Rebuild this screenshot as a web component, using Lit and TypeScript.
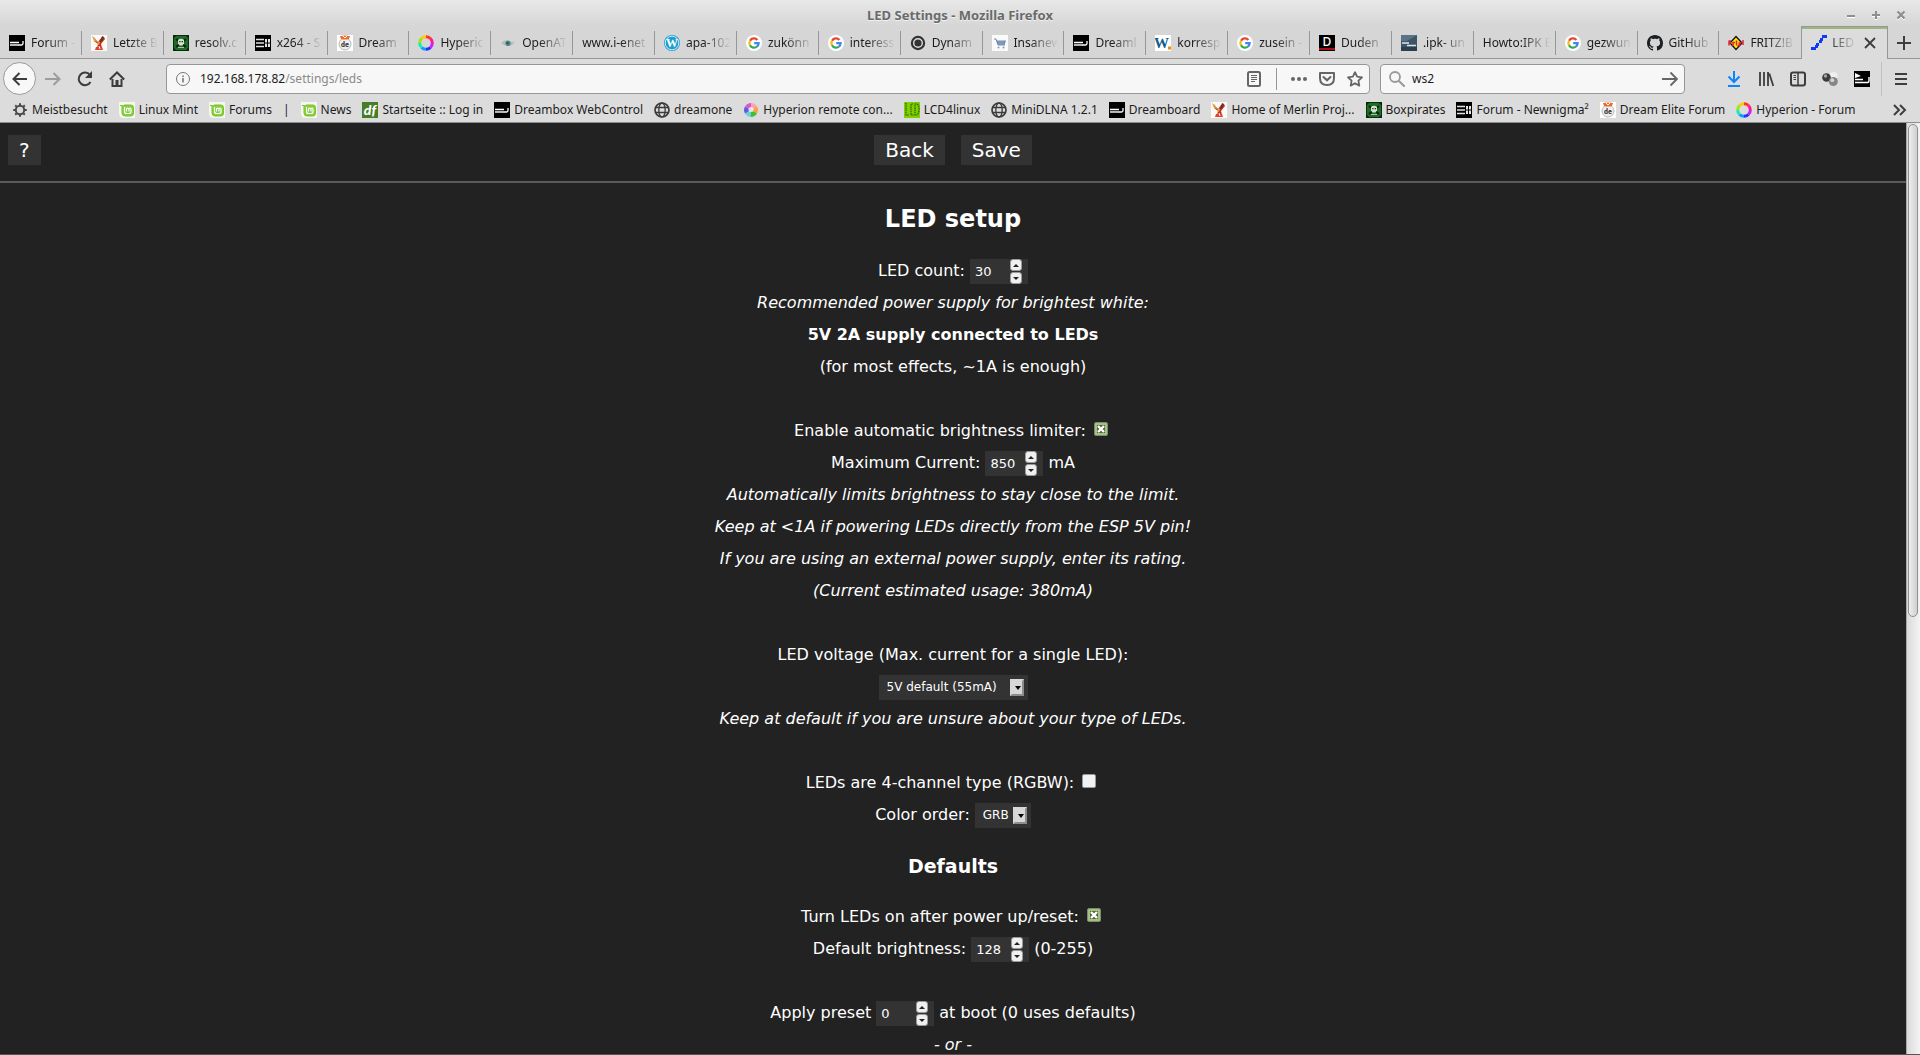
import { LitElement, html, svg, css, nothing, TemplateResult } from "lit";
import { customElement, property, state } from "lit/decorators.js";

type Art = TemplateResult;

const icon = (art: Art, size = 16, box = 16) =>
  html`<svg class="icon" width=${size} height=${size} viewBox="0 0 ${box} ${box}" fill="none" aria-hidden="true">${art}</svg>`;

const art: Record<string, Art> = {
  dream: svg`<rect width="16" height="16" fill="#000"/><path d="M1 7.500h9M1 10h11.500q1.500 0 1.500-1.500V6" stroke="#fff" stroke-width="1.300"/><path d="M1 10.200h8" stroke="#aaa"/>`,
  merlin: svg`<rect width="16" height="16" fill="#fbfaf6"/><path d="M3 3l4 4 3-4 3-1 1 2-4 5 1 4H6l1-4-4-3z" fill="#c5301c"/><path d="M1 1l3 2 2 4-3-1zM7 6l2 1-1 3-2-1z" fill="#d9a04a"/><path d="M11 1l2 1-2 4-2 1z" fill="#5b3220"/><path d="M5 12h6l1 3H4z" fill="#e0452c"/><path d="M8 11l1 3" stroke="#fff"/>`,
  skull: svg`<rect width="16" height="16" fill="#0c2d10"/><rect x="1" y="1" width="14" height="14" fill="#1f6b28"/><path d="M0 2h2V0M14 0v2h2M0 14h2v2M14 16v-2h2" stroke="#061a08"/><path d="M3 4l10 8M13 4L3 12" stroke="#0a220c" stroke-width="2"/><path d="M5 5Q8 2.500 11 5v3.500L9.500 10.500h-3L5 8.500z" fill="#d5dfd0"/><path d="M6.300 6h1.200v1.200H6.300zM8.700 6h1.200v1.200H8.700z" fill="#0a220c"/><path d="M5 12.500h6" stroke="#a8c2a4"/>`,
  bars: svg`<rect width="16" height="16" fill="#000"/><path d="M1 4.500h8M1 8h8M1 11.500h8" stroke="#e4e4e4" stroke-width="1.600"/><path d="M10 4h2v8h-2zM13 4h2v8h-2z" fill="#e4e4e4"/><path d="M10 8h5" stroke="#000"/>`,
  elite: svg`<rect width="16" height="16" fill="#fff"/><circle cx="8" cy="9" r="6" fill="#eee" stroke="#b9b9b9"/><path d="M3 1q5-1 10 0l-1 3q-4 1-8 0z" fill="#ef6b2e"/><path d="M6 1l2 2 2-2" stroke="#fff"/><text x="8" y="12" text-anchor="middle" font-family="Roboto" font-weight="900" font-size="7" fill="#444">de</text>`,
  ring: svg`<g stroke-width="3"><path d="M8 1.700A6.300 6.300 0 0 1 12.450 3.550" stroke="#ff3a20"/><path d="M12.450 3.550A6.300 6.300 0 0 1 14.300 8" stroke="#ff1a8c"/><path d="M14.300 8A6.300 6.300 0 0 1 12.450 12.450" stroke="#d01cff"/><path d="M12.450 12.450A6.300 6.300 0 0 1 8 14.300" stroke="#2632ff"/><path d="M8 14.300A6.300 6.300 0 0 1 3.550 12.450" stroke="#1298ff"/><path d="M3.550 12.450A6.300 6.300 0 0 1 1.700 8" stroke="#10f0b0"/><path d="M1.700 8A6.300 6.300 0 0 1 3.550 3.550" stroke="#9ae812"/><path d="M3.550 3.550A6.300 6.300 0 0 1 8 1.700" stroke="#ffc80a"/></g>`,
  eye: svg`<path d="M1 8Q6 3 10 6q3 2 5 0-2 5-7 5Q4 11 1 8z" fill="#b8bcbc"/><circle cx="8" cy="8.300" r="2.600" fill="#47878a"/><circle cx="7.500" cy="8" r="1" fill="#1e4c52"/>`,
  wordpress: svg`<circle cx="8" cy="8" r="8" fill="#1b9ed0"/><circle cx="8" cy="8" r="6.800" stroke="#fff" stroke-width=".8"/><text x="8" y="12.300" text-anchor="middle" font-family="Liberation Serif" font-weight="700" font-size="12" fill="#fff">W</text>`,
  google: svg`<circle cx="8" cy="8" r="8" fill="#fff"/><g stroke-width="2.300"><path d="M11.400 4.900A4.600 4.600 0 0 0 4 5.700" stroke="#ea4335"/><path d="M4 5.700a4.600 4.600 0 0 0 0 4.600" stroke="#fbbc05"/><path d="M4 10.300a4.600 4.600 0 0 0 7 1.200" stroke="#34a853"/><path d="M11 11.500A4.600 4.600 0 0 0 12.600 8.200H8.200" stroke="#4285f4"/></g>`,
  disc: svg`<circle cx="8" cy="8" r="7.200" fill="#333"/><circle cx="8" cy="8" r="4.300" stroke="#ddd" stroke-width="1.400"/>`,
  cart: svg`<rect width="16" height="16" fill="#fafafa"/><path d="M2 4h2l2 6h7" stroke="#7089ad"/><path d="M4.500 5.500H14L12.500 10H6z" fill="#6d89b5"/><path d="M7 6v4M9 6v4M11 6v4" stroke="#a8bbd7" stroke-width=".6"/><circle cx="6.500" cy="12.500" r="1" fill="#8795a8"/><circle cx="11.500" cy="12.500" r="1" fill="#8795a8"/>`,
  wdot: svg`<rect width="16" height="16" fill="#fff"/><text x="-1" y="13" font-family="Liberation Serif" font-weight="700" font-size="15" fill="#145c8c">W</text><rect x="13" y="11.500" width="3" height="3" fill="#f58a0a"/>`,
  duden: svg`<rect width="16" height="16" fill="#000"/><text x="8" y="11" text-anchor="middle" font-family="Noto Sans" font-weight="500" font-size="12" fill="#fff">D</text><rect y="13" width="16" height="2" fill="#a80f17"/>`,
  slate: svg`<rect width="16" height="16" fill="#3d5566"/><path d="M0 0h16L6 6H0z" fill="#587487"/><path d="M0 12h16v4H0z" fill="#2b404f"/><path d="M1 8h7M6 10.500h9" stroke="#dfe6ea" stroke-width="1.500"/>`,
  github: svg`<path fill="#1b1f23" d="M8 0C3.580 0 0 3.580 0 8c0 3.540 2.290 6.530 5.470 7.590.4.070.55-.17.55-.38 0-.19-.01-.82-.01-1.490-2.010.37-2.530-.49-2.690-.94-.09-.23-.48-.94-.82-1.130-.28-.15-.68-.52-.01-.53.63-.01 1.080.58 1.230.82.72 1.210 1.870.87 2.330.66.07-.52.28-.87.51-1.070-1.780-.2-3.640-.89-3.640-3.950 0-.87.31-1.590.82-2.150-.08-.2-.36-1.020.08-2.120 0 0 .67-.21 2.200.82.64-.18 1.320-.27 2-.27s1.360.09 2 .27c1.530-1.040 2.200-.82 2.200-.82.44 1.100.16 1.920.08 2.120.51.56.82 1.270.82 2.150 0 3.070-1.870 3.750-3.650 3.950.29.25.54.73.54 1.480 0 1.070-.01 1.930-.01 2.200 0 .21.15.46.55.38A8.010 8.010 0 0 0 16 8c0-4.420-3.580-8-8-8z"/>`,
  fritz: svg`<path d="M8 1.500L14 8l-6 6.500L2 8z" fill="#ffe600" stroke="#111" stroke-width="1.300"/><path d="M1 5.500v5M1 6h2M1 8h2M5 7v4M5 7.500h2M8.500 5.500v5M10.500 8h2l-2 2.500h2M15 5v5" stroke="#e0203f" stroke-width="1.500"/>`,
  steps: svg`<path d="M11 0h5v3h-5zM9 3h3v3H9zM8 5h3v3H8zM5 8h3v3H5zM4 10h3v3H4zM0 12h5v3H0z" fill="#0b3bf5"/>`,
  mint: svg`<path d="M0 0h16v16H5Q0 16 0 11z" fill="#f4f8ee"/><path d="M1 3.500h2V11q0 3 3 3h6q2.500 0 2.500-3V5.500Q14.500 3 12 3H5" fill="#87cf3e" stroke="#7cc22f"/><path d="M5.500 5v4.500q0 2 2 2h2.500q2 0 2-2V7q0-1-1-1t-1 1v2.500M9.500 7q0-1-1-1t-1 1v2.500" stroke="#fff" stroke-width="1.200"/>`,
  gear: svg`<circle cx="8" cy="8" r="4.200" stroke="#4a4a4a" stroke-width="2"/><path d="M8 1.200v2M8 12.800v2M1.200 8h2M12.800 8h2M3.200 3.200l1.400 1.400M11.400 11.400l1.400 1.400M3.200 12.800l1.400-1.400M11.400 4.600l1.400-1.400" stroke="#4a4a4a" stroke-width="2"/>`,
  df: svg`<rect width="16" height="16" fill="#477d2a"/><text x="8" y="12.500" text-anchor="middle" font-family="Lato" font-weight="900" font-style="italic" font-size="14" fill="#fff">df</text>`,
  globe: svg`<g stroke="#3c3c3c" stroke-width="1.700"><circle cx="8" cy="8" r="7"/><ellipse cx="8" cy="8" rx="3.200" ry="7" stroke-width="1.300"/><path d="M1.800 5.500h12.400M1.800 10.500h12.400" stroke-width="1.300"/></g>`,
  ball: svg`<circle cx="8" cy="8" r="7" fill="#e9d9ef"/><path d="M8 8V1a7 7 0 0 1 6 3.500z" fill="#f7a3b5"/><path d="M8 8l6-3.500a7 7 0 0 1 0 7z" fill="#f6a04e"/><path d="M8 8l6 3.500A7 7 0 0 1 8 15z" fill="#3fbf2c"/><path d="M8 8v7a7 7 0 0 1-6-3.500z" fill="#6fcfd6"/><path d="M8 8l-6 3.500a7 7 0 0 1 0-7z" fill="#5a5fe0"/><path d="M8 8L2 4.500A7 7 0 0 1 8 1z" fill="#d758cf"/><circle cx="8" cy="7.500" r="2.600" fill="#fff" opacity=".7"/>`,
  lcd: svg`<rect width="16" height="16" fill="#7ed000"/><path d="M2 1v12h3M9 2H7v11h3M11 2h2q2 1 2 5t-2 6h-2z" stroke="#2d5c00" stroke-width="1.200" stroke-dasharray="1.500 .7"/>`,
  info: svg`<circle cx="8" cy="8" r="6.500" stroke="#777"/><path d="M8 7v4.500M8 4.500v1.500" stroke="#777" stroke-width="1.600"/>`,
  back: svg`<path d="M15 8H2M7.500 2L1.500 8l6 6" stroke="#3d3d3d" stroke-width="2"/>`,
  forward: svg`<path d="M0 8h14M8.500 2l6 6-6 6" stroke="#9c9c9c" stroke-width="2"/>`,
  reload: svg`<path d="M13.500 11A6.300 6.300 0 1 1 13 4" stroke="#3d3d3d" stroke-width="2"/><path d="M15 0v7H8z" fill="#3d3d3d"/>`,
  home: svg`<path d="M.8 8.500L8 1.500l7.200 7" stroke="#3d3d3d" stroke-width="2"/><path d="M3.500 8v7h9V8" stroke="#3d3d3d" stroke-width="2"/><path d="M6.500 9h3v6h-3z" fill="#3d3d3d"/>`,
  reader: svg`<rect x="2" y="1" width="12" height="14" rx="1.500" stroke="#666" stroke-width="2"/><path d="M5 4.500h6M5 6.500h6M5 8.500h6M5 10.500h4" stroke="#666"/>`,
  dots: svg`<circle cx="2" cy="8" r="2" fill="#666"/><circle cx="8" cy="8" r="2" fill="#666"/><circle cx="14" cy="8" r="2" fill="#666"/>`,
  pocket: svg`<path d="M1 2h14v5q0 7-7 7T1 7z" stroke="#666" stroke-width="2" stroke-linejoin="round"/><path d="M4.500 6L8 9.300 11.500 6" stroke="#666" stroke-width="2" stroke-linecap="round"/>`,
  star: svg`<path d="M8 1.200l2.100 4.500 4.900.6-3.600 3.400.9 4.900L8 12.200l-4.300 2.400.9-4.900L1 6.300l4.900-.6z" stroke="#666" stroke-width="1.800" stroke-linejoin="round"/>`,
  search: svg`<circle cx="6" cy="6" r="5" stroke="#999" stroke-width="1.800"/><path d="M9.700 9.700l6 6" stroke="#999" stroke-width="2"/>`,
  go: svg`<path d="M0 8h14.500M8.500 1.500L15 8l-6.500 6.500" stroke="#666" stroke-width="1.800"/>`,
  download: svg`<path d="M8 0v10M2.500 5.500L8 11l5.500-5.500M2 15h12" stroke="#0a84ff" stroke-width="2"/>`,
  library: svg`<path d="M2 1v14M6 1v14M10 1v14M11.300 2.500l4 12.500" stroke="#3d3d3d" stroke-width="1.800"/>`,
  sidebar: svg`<rect x="1" y="1.500" width="14" height="13" rx="2" stroke="#3d3d3d" stroke-width="2"/><path d="M8 2v12" stroke="#3d3d3d" stroke-width="1.500"/><path d="M3.500 4.500H6M3.500 6.500H6M3.500 8.500H6" stroke="#3d3d3d"/>`,
  balls: svg`<circle cx="11.500" cy="5" r="4" fill="#efefef"/><circle cx="4.500" cy="6.500" r="4.300" fill="#3c3c3c"/><circle cx="3.500" cy="5" r="1.700" fill="#a4a4a4"/><circle cx="11.300" cy="10.500" r="4.500" fill="#868686"/><circle cx="10.300" cy="9.200" r="1.900" fill="#d5d5d5"/>`,
  dreamFlag: svg`<rect width="16" height="16" fill="#000"/><path d="M1 8.500h8M1 11.500h12.500q1.500 0 1.500-1.500V6" stroke="#fff" stroke-width="1.400"/><path d="M1 2l6 3-6 2z" fill="#fff"/>`,
  menu: svg`<path d="M2 3h12M2 8h12M2 13h12" stroke="#3d3d3d" stroke-width="2"/>`,
  more: svg`<path d="M2 3l5 5-5 5M8 3l5 5-5 5" stroke="#3d3d3d" stroke-width="2"/>`,
  plus: svg`<path d="M8 1v14M1 8h14" stroke="#3d3d3d" stroke-width="2"/>`,
  close: svg`<path d="M3 3l10 10M13 3L3 13" stroke="#3d3d3d" stroke-width="1.800"/>`,
  winMin: svg`<path d="M4 10h8" stroke="#fff" stroke-width="2"/><path d="M4 9h8" stroke="#8f8f8f" stroke-width="2"/>`,
  winMax: svg`<path d="M8 5v8M4 9h8" stroke="#fff" stroke-width="2"/><path d="M8 4v8M4 8h8" stroke="#8f8f8f" stroke-width="2"/>`,
  winClose: svg`<path d="M4.500 5.500l7 7M11.500 5.500l-7 7" stroke="#fff" stroke-width="2"/><path d="M4.500 4.500l7 7M11.500 4.500l-7 7" stroke="#8f8f8f" stroke-width="2.400"/>`,
};

const TABS: [string, string][] = [
  ["dream", "Forum -"], ["merlin", "Letzte B"], ["skull", "resolv.c"], ["bars", "x264 - S"],
  ["elite", "Dream"], ["ring", "Hyperic"], ["eye", "OpenAT"], ["", "www.i-enet"],
  ["wordpress", "apa-102"], ["google", "zukönn"], ["google", "interess"], ["disc", "Dynam"],
  ["cart", "Insanew"], ["dream", "Dreaml"], ["wdot", "korresp"], ["google", "zusein -"],
  ["duden", "Duden"], ["slate", ".ipk- un"], ["", "Howto:IPK E"], ["google", "gezwun"],
  ["github", "GitHub"], ["fritz", "FRITZ!B"], ["steps", "LED"],
];

const BOOKMARKS: [string, string][] = [
  ["gear", "Meistbesucht"], ["mint", "Linux Mint"], ["mint", "Forums"], ["", "|"], ["mint", "News"],
  ["df", "Startseite :: Log in"], ["dream", "Dreambox WebControl"], ["globe", "dreamone"],
  ["ball", "Hyperion remote con..."], ["lcd", "LCD4linux"], ["globe", "MiniDLNA 1.2.1"],
  ["dream", "Dreamboard"], ["merlin", "Home of Merlin Proj..."], ["skull", "Boxpirates"],
  ["bars", "Forum - Newnigma²"], ["elite", "Dream Elite Forum"], ["ring", "Hyperion - Forum"],
];

@customElement("browser-chrome")
export class BrowserChrome extends LitElement {
  static styles = css`
    :host { display: block; font: 12px/18px "Noto Sans", sans-serif; color: #1c1c1c; }
    * { box-sizing: border-box; }
    button { border: 0; padding: 0; background: none; font: inherit; color: inherit; display: flex; align-items: center; justify-content: center; }
    .icon { display: block; flex: none; }
    .title { display: grid; grid-template-columns: 1fr auto 1fr; align-items: center; height: 26px; padding: 4px 0 0; background: linear-gradient(#e8e8e8, #d6d6d6); }
    .name { grid-column: 2; margin: 0; font-size: 13px; font-weight: 700; color: #6a6a6a; text-shadow: 0 1px #f2f2f2; }
    .window { display: flex; justify-content: flex-end; gap: 9px; padding-right: 11px; }
    .tabs { display: flex; height: 33px; background: #d6d6d6; box-shadow: inset 0 -1px #979797; }
    .tab { position: relative; flex: 1 1 0; min-width: 0; justify-content: flex-start; gap: 6px; padding: 0 6px 0 9px; }
    .tab::after { content: ""; position: absolute; right: 0; top: 5px; width: 1px; height: 24px; background: #979797; }
    .tab.last::after, .tab.current::after { display: none; }
    .label { flex: 1; min-width: 0; overflow: hidden; white-space: nowrap; text-align: left; mask-image: linear-gradient(to left, transparent, #000 28px); }
    .current { background: #dcdcdc; border: 1px solid #979797; border-bottom: 0; box-shadow: inset 0 2px #9ab87c; padding-right: 9px; gap: 5px; }
    .add { width: 32px; }
    .nav { display: flex; align-items: center; height: 39px; background: #dcdcdc; padding: 0 11px 0 3px; }
    .back { width: 33px; height: 33px; border: 1px solid #999; border-radius: 50%; background: #f8f8f8; }
    .tools { display: flex; gap: 16px; padding-left: 9px; flex: 1; }
    .field { display: flex; align-items: center; height: 30px; border: 1px solid #979797; border-radius: 4px; background: #f7f7f7; padding: 0 6px 0 8px; }
    .url { flex: 0 1 1204px; margin-right: 10px; }
    .find { flex: 0 1 305px; }
    .field input { flex: 1; min-width: 0; border: 0; outline: 0; padding: 0; background: none; font: inherit; color: inherit; }
    .address { flex: 1; display: flex; padding-left: 9px; }
    .path { color: #8a8a8a; }
    .actions { display: flex; gap: 12px; align-items: center; }
    .rule { width: 1px; height: 22px; background: #979797; margin-right: 2px; }
    .actions button:first-child { margin-right: 2px; }
    .actions { gap: 12px; }
    .find input { padding-left: 7px; }
    .right { display: flex; gap: 16px; align-items: center; padding-left: 41px; }
    .split { width: 1px; height: 34px; background: #c2c2c2; margin: 0 -5px; }
    .marks { display: flex; align-items: center; gap: 11px; height: 25px; background: #dcdcdc; border-bottom: 1px solid #8e8e8e; padding: 0 12px; white-space: nowrap; }
    .mark { display: flex; align-items: center; gap: 4px; color: inherit; text-decoration: none; }
    .more { margin-left: auto; }
  `;

  private tool(name: string, label: string, cls = "") {
    return html`<button class=${cls} aria-label=${label}>${icon(art[name])}</button>`;
  }

  render() {
    const last = TABS.length - 1;
    return html`
      <header class="title">
        <h1 class="name">LED Settings - Mozilla Firefox</h1>
        <div class="window">
          ${this.tool("winMin", "Minimize")}${this.tool("winMax", "Maximize")}${this.tool("winClose", "Close window")}
        </div>
      </header>
      <div class="tabs" role="tablist">
        ${TABS.map(([pic, text], i) => html`
          <button role="tab" aria-selected=${i === last ? "true" : "false"} class="tab ${i === last ? "current" : i === last - 1 ? "last" : ""}">
            ${pic ? icon(art[pic]) : nothing}<span class="label">${text}</span>${i === last ? icon(art.close) : nothing}
          </button>`)}
        ${this.tool("plus", "New tab", "add")}
      </div>
      <nav class="nav" aria-label="Navigation">
        ${this.tool("back", "Back", "back")}
        <div class="tools">
          ${this.tool("forward", "Forward")}${this.tool("reload", "Reload")}${this.tool("home", "Home")}
        </div>
        <div class="field url">
          ${icon(art.info)}
          <div class="address"><span>192.168.178.82</span><span class="path">/settings/leds</span></div>
          <div class="actions">
            ${this.tool("reader", "Reader view")}<span class="rule"></span>
            ${this.tool("dots", "Page actions")}${this.tool("pocket", "Save to Pocket")}${this.tool("star", "Bookmark")}
          </div>
        </div>
        <div class="field find">
          ${icon(art.search)}<input type="text" aria-label="Search" value="ws2" />${this.tool("go", "Search")}
        </div>
        <div class="right">
          ${this.tool("download", "Downloads")}${this.tool("library", "Library")}${this.tool("sidebar", "Sidebars")}
          ${this.tool("balls", "Extension")}${this.tool("dreamFlag", "Dreambox")}<span class="split"></span>${this.tool("menu", "Menu")}
        </div>
      </nav>
      <nav class="marks" aria-label="Bookmarks">
        ${BOOKMARKS.map(([pic, text]) => pic
          ? html`<a class="mark" href="#">${icon(art[pic])}<span>${text}</span></a>`
          : html`<span>${text}</span>`)}
        ${this.tool("more", "More bookmarks", "more")}
      </nav>`;
  }
}

@customElement("number-field")
export class NumberField extends LitElement {
  static shadowRootOptions = { ...LitElement.shadowRootOptions, delegatesFocus: true };
  static styles = css`
    :host { display: inline-flex; }
    .box { display: flex; align-items: center; width: 58px; height: 25px; background: #333; padding: 1px 6px 0 5px; box-sizing: border-box; }
    .value { appearance: textfield; flex: 1; width: 0; min-width: 0; border: 0; outline: 0; padding: 0; background: none; color: #fff; font: 13px/17px "DejaVu Sans", sans-serif; }
    .value::-webkit-inner-spin-button { appearance: none; display: none; }
    .spin { display: flex; flex-direction: column; gap: 1px; }
    .step { display: flex; align-items: center; justify-content: center; width: 12px; height: 12px; padding: 0; border: 1px solid #9a9a9a; border-radius: 3px; background: #f0f0f0; }
  `;
  @property() label = "";
  @property({ type: Number }) value = 0;

  render() {
    return html`<span class="box">
      <input class="value" type="number" aria-label=${this.label} .value=${String(this.value)} />
      <span class="spin">
        <button class="step" aria-label="Increase" @click=${() => this.value++}>
          <svg width="6" height="3" viewBox="0 0 6 3"><path d="M3 0l3 3H0z" fill="#222"/></svg></button>
        <button class="step" aria-label="Decrease" @click=${() => this.value--}>
          <svg width="6" height="3" viewBox="0 0 6 3"><path d="M3 3L0 0h6z" fill="#222"/></svg></button>
      </span></span>`;
  }
}

@customElement("app-root")
export class AppRoot extends LitElement {
  static styles = css`
    :host { display: flex; flex-direction: column; height: 100vh; overflow: hidden; background: #222; }
    * { box-sizing: border-box; }
    .view { flex: 1; min-height: 0; display: flex; border-bottom: 1px solid #555; }
    .page { flex: 1; min-width: 0; overflow: hidden; color: #fff; font: 16px/32px "DejaVu Sans", sans-serif; }
    .bar { display: grid; grid-template-columns: 1fr auto 1fr; padding: 12px 8px 16px; border-bottom: 2px solid #5a5a5a; }
    .pair { display: flex; gap: 16px; }
    .btn { justify-self: start; height: 30px; border: 0; padding: 0 11px; background: #333; color: #fff; font: 20px/24px "DejaVu Sans", sans-serif; }
    .h2 { margin: 22px 0; text-align: center; font-size: 24px; line-height: 28px; }
    .h3 { margin: 24px 0; text-align: center; font-size: 19px; line-height: 22px; }
    .row { display: flex; justify-content: center; align-items: center; gap: 5px; height: 32px; }
    .row.gap { margin-top: 32px; }
    .tick { position: relative; display: flex; width: 14px; height: 14px; margin: 0 4px 4px 3px; }
    .tick input { appearance: none; width: 14px; height: 14px; margin: 0; border: 1px solid #999; border-radius: 2px; background: #f2f2f2; }
    .tick input:checked { background: #a3c282; border-color: #7d8b70; }
    .tick svg { position: absolute; inset: 0; pointer-events: none; }
    .pick { position: relative; display: flex; }
    .pick select { appearance: none; height: 25px; border: 0; border-radius: 0; padding: 0 30px 0 8px; background: #333; color: #fff; font: 12px/17px "DejaVu Sans", sans-serif; }
    .pick.tight select { padding-right: 22px; }
    .drop { position: absolute; right: 4px; top: 4px; pointer-events: none; }
    .track { width: 14px; border-left: 1px solid #a8a8a8; background: linear-gradient(to right, #dadada, #f4f4f4); padding: 1px 2px 0 1px; }
    .thumb { height: 53%; border: 1px solid #8f8f8f; border-radius: 6px; background: linear-gradient(to right, #eee, #cfcfcf); }
  `;

  @state() private limiter = true;
  @state() private rgbw = false;
  @state() private turnOn = true;

  private tick(id: string, on: boolean, set: (v: boolean) => void) {
    return html`<span class="tick">
      <input id=${id} type="checkbox" .checked=${on} @change=${(e: Event) => set((e.target as HTMLInputElement).checked)} />
      ${on ? html`<svg width="14" height="14" viewBox="0 0 14 14" fill="none"><rect x="3" y="3" width="8" height="8" fill="#55663f"/><path d="M4 4l6 6M10 4l-6 6" stroke="#fff" stroke-width="2.400"/></svg>` : nothing}
    </span>`;
  }

  private pick(id: string, text: string, cls = "") {
    return html`<span class="pick ${cls}">
      <select id=${id}><option>${text}</option></select>
      <svg class="drop" width="14" height="17" viewBox="0 0 14 17"><path d="M0 0h14v17H0z" fill="#8c8c8c"/><path d="M0 0h14L12 2v13H2L0 17z" fill="#d8d8d8"/><path d="M5 7h6L8 11z" fill="#000"/></svg>
    </span>`;
  }

  render() {
    return html`
      <browser-chrome></browser-chrome>
      <div class="view">
        <main class="page">
          <div class="bar">
            <button class="btn">?</button>
            <div class="pair"><button class="btn">Back</button><button class="btn">Save</button></div>
          </div>
          <h2 class="h2">LED setup</h2>
          <div class="row"><label for="count">LED count:</label><number-field id="count" label="LED count" .value=${30}></number-field></div>
          <div class="row"><i>Recommended power supply for brightest white:</i></div>
          <div class="row"><b>5V 2A supply connected to LEDs</b></div>
          <div class="row">(for most effects, ~1A is enough)</div>
          <div class="row gap"><label for="abl">Enable automatic brightness limiter:</label>${this.tick("abl", this.limiter, (v) => (this.limiter = v))}</div>
          <div class="row"><label for="max">Maximum Current:</label><number-field id="max" label="Maximum Current" .value=${850}></number-field><span>mA</span></div>
          <div class="row"><i>Automatically limits brightness to stay close to the limit.</i></div>
          <div class="row"><i>Keep at &lt;1A if powering LEDs directly from the ESP 5V pin!</i></div>
          <div class="row"><i>If you are using an external power supply, enter its rating.</i></div>
          <div class="row"><i>(Current estimated usage: 380mA)</i></div>
          <div class="row gap"><label for="volt">LED voltage (Max. current for a single LED):</label></div>
          <div class="row">${this.pick("volt", "5V default (55mA)")}</div>
          <div class="row"><i>Keep at default if you are unsure about your type of LEDs.</i></div>
          <div class="row gap"><label for="rgbw">LEDs are 4-channel type (RGBW):</label>${this.tick("rgbw", this.rgbw, (v) => (this.rgbw = v))}</div>
          <div class="row"><label for="order">Color order:</label>${this.pick("order", "GRB", "tight")}</div>
          <h3 class="h3">Defaults</h3>
          <div class="row"><label for="boot">Turn LEDs on after power up/reset:</label>${this.tick("boot", this.turnOn, (v) => (this.turnOn = v))}</div>
          <div class="row"><label for="bri">Default brightness:</label><number-field id="bri" label="Default brightness" .value=${128}></number-field><span>(0-255)</span></div>
          <div class="row gap"><label for="preset">Apply preset</label><number-field id="preset" label="Apply preset" .value=${0}></number-field><span>at boot (0 uses defaults)</span></div>
          <div class="row"><i>- or -</i></div>
        </main>
        <div class="track"><div class="thumb"></div></div>
      </div>`;
  }
}
